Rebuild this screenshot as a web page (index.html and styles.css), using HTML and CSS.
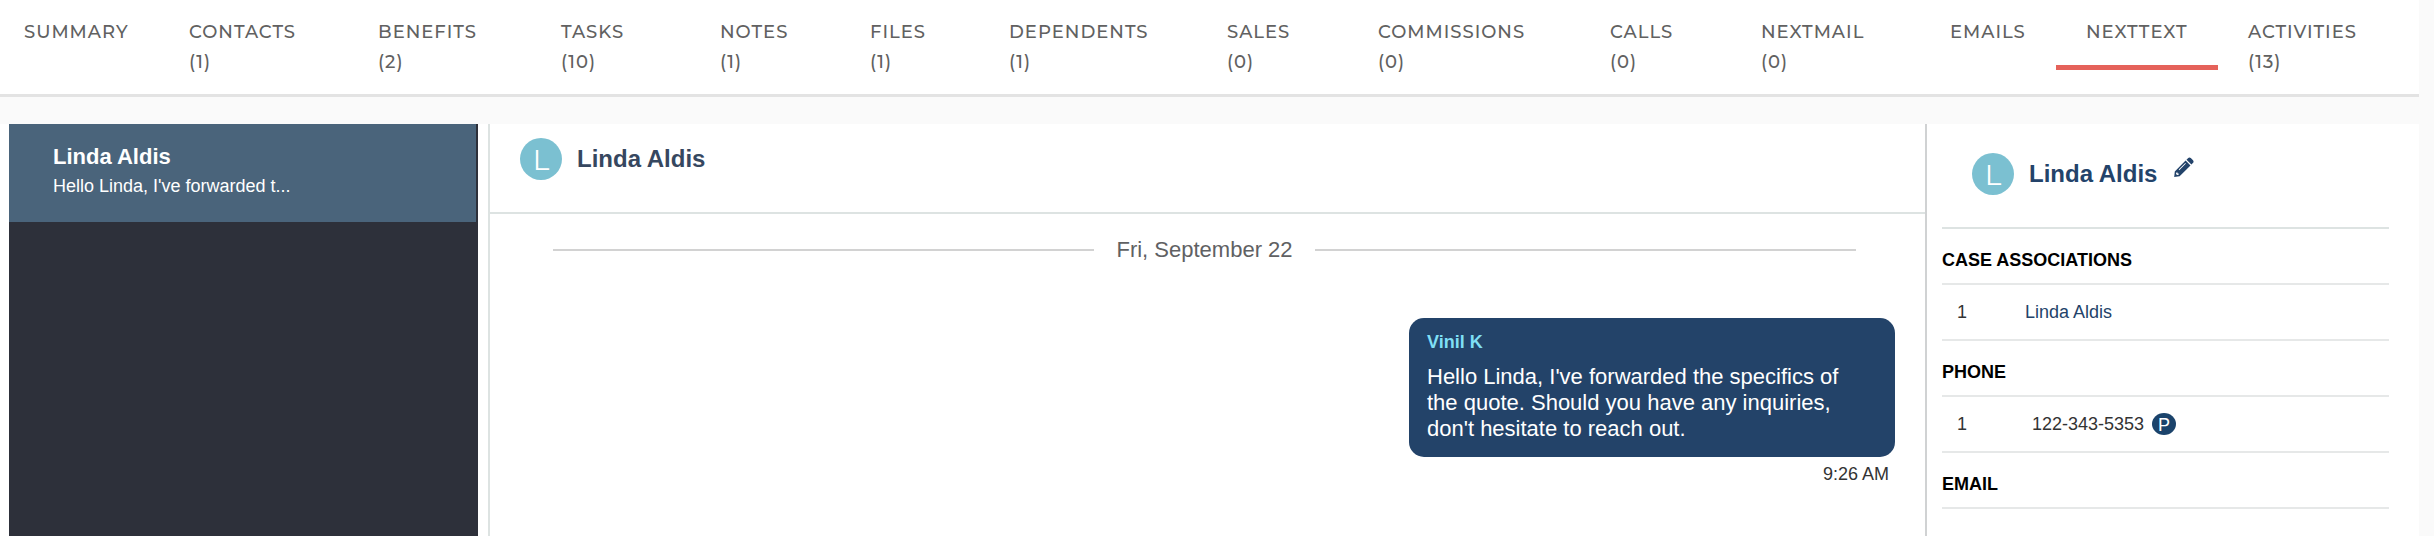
FILE: index.html
```html
<!DOCTYPE html>
<html lang="en">
<head>
  <meta charset="UTF-8" />
  <meta name="viewport" content="width=device-width, initial-scale=1.0" />
  <title>NextText</title>
  <link rel="stylesheet" href="styles.css">
</head>
<body>
  <div class="page">
    <nav class="tabs">
      <a href="#">SUMMARY</a>
      <a href="#">CONTACTS<br>(1)</a>
      <a href="#">BENEFITS<br>(2)</a>
      <a href="#">TASKS<br>(10)</a>
      <a href="#">NOTES<br>(1)</a>
      <a href="#">FILES<br>(1)</a>
      <a href="#">DEPENDENTS<br>(1)</a>
      <a href="#">SALES<br>(0)</a>
      <a href="#">COMMISSIONS<br>(0)</a>
      <a href="#">CALLS<br>(0)</a>
      <a href="#">NEXTMAIL<br>(0)</a>
      <a href="#">EMAILS</a>
      <a href="#" class="active">NEXTTEXT</a>
      <a href="#">ACTIVITIES<br>(13)</a>
    </nav>

    <main class="content">
      <aside class="conversations">
        <a href="#" class="conversation">
          <strong class="conversation-name">Linda Aldis</strong>
          <span class="conversation-preview">Hello Linda, I've forwarded t...</span>
        </a>
      </aside>

      <section class="chat">
        <header class="chat-header">
          <span class="avatar">L</span>
          <h2 class="name">Linda Aldis</h2>
        </header>
        <div class="messages">
          <div class="date">Fri, September 22</div>
          <div class="message">
            <div class="bubble">
              <strong class="sender">Vinil K</strong>
              <p>Hello Linda, I've forwarded the specifics of the quote. Should you have any inquiries, don't hesitate to reach out.</p>
            </div>
            <time class="time">9:26 AM</time>
          </div>
        </div>
      </section>

      <aside class="details">
        <header class="details-header">
          <span class="avatar">L</span>
          <h2 class="name">Linda Aldis</h2>
          <button type="button" class="edit" aria-label="Edit contact">
            <svg viewBox="0 0 20 20" width="20" height="20">
              <path fill="currentColor" d="M14 1.200c.8-.9 2-.9 2.800-.1l2.200 2.200c.8.8.8 2-.1 2.800l-1.500 1.500-4.900-4.900z" />
              <path fill="currentColor" fill-rule="evenodd" d="M11.600 3.600l4.900 4.900L5.600 19.300.2 19.900.8 14.400zM2.300 15.400l-.3 1.600 1.100 1.100 1.600-.3v-1.300H3.600v-1.100zM11.300 6L4.700 12.600l.6.600L11.900 6.600z" />
            </svg>
          </button>
        </header>

        <h3 class="section-title">CASE ASSOCIATIONS</h3>
        <div class="row">
          <span class="index">1</span>
          <a href="#">Linda Aldis</a>
        </div>

        <h3 class="section-title">PHONE</h3>
        <div class="row phone">
          <span class="index">1</span>
          <span>122-343-5353</span>
          <span class="badge">P</span>
        </div>

        <h3 class="section-title">EMAIL</h3>
      </aside>
    </main>
  </div>
</body>
</html>
```
FILE: styles.css
```css
* {
  box-sizing: border-box;
}
body {
  margin: 0;
  background: #fafafa;
  color: #333;
  font-family: "Liberation Sans", Arial, Helvetica, sans-serif;
  font-size: 18px;
}
h2, h3, p {
  margin: 0;
}
a {
  color: #23436a;
  text-decoration: none;
}
.page {
  display: flex;
  flex-direction: column;
  min-height: 100vh;
  margin-right: 15px;
}

/* top tabs */
.tabs {
  display: grid;
  grid-template-columns: 159fr 189fr 183fr 159fr 150fr 139fr 218fr 151fr 232fr 151fr 189fr 136fr 162fr 201fr;
  align-items: start;
  height: 97px;
  padding-top: 17px;
  background: #fff;
  border-bottom: 3px solid #e3e3e3;
}
.tabs a {
  padding-left: 30px;
  color: #616161;
  font-family: Montserrat, Inter, sans-serif;
  font-size: 18px;
  font-weight: 500;
  line-height: 30px;
  letter-spacing: 1px;
}
.tabs a:first-child {
  padding-left: 24px;
}
.tabs .active {
  height: 53px;
  border-bottom: 5px solid #e5625a;
}

.content {
  display: grid;
  grid-template-columns: 469px 1fr 494px;
  flex: 1;
  margin-top: 27px;
  padding-left: 9px;
  background: #fff;
}

/* conversation list */
.conversations {
  padding-right: 2px;
  background: #2d303a;
}
.conversation {
  display: block;
  height: 98px;
  padding: 20px 44px;
  background: #4a647b;
  color: #fff;
}
.conversation-name {
  display: block;
  font-size: 22px;
  line-height: 26px;
}
.conversation-preview {
  display: block;
  line-height: 32px;
}

/* chat */
.chat {
  margin-left: 10px;
  border-left: 2px solid #dde3e2;
}
.chat-header {
  display: flex;
  align-items: flex-start;
  gap: 15px;
  height: 90px;
  padding: 14px 30px;
  border-bottom: 2px solid #dde3e2;
}
.avatar {
  width: 42px;
  height: 42px;
  border-radius: 50%;
  background: #7bc0d1;
  color: #fff;
  font-family: Montserrat, Lato, sans-serif;
  font-size: 28px;
  line-height: 44px;
  text-align: center;
}
.name {
  color: #36475f;
  font-size: 24px;
  line-height: 42px;
}
.messages {
  padding: 20px 30px;
}
.date {
  display: flex;
  align-items: center;
  gap: 22px;
  padding: 0 39px 0 33px;
  color: #606163;
  font-size: 22px;
  line-height: 32px;
}
.date::before,
.date::after {
  content: "";
  flex: 1;
  height: 2px;
  background: #d2d2d2;
}
.message {
  display: flex;
  flex-direction: column;
  align-items: flex-end;
  margin-top: 52px;
}
.bubble {
  width: 486px;
  padding: 12px 40px 15px 18px;
  border-radius: 15px;
  background: #234369;
  color: #fff;
  font-size: 22px;
  line-height: 26px;
}
.sender {
  display: block;
  margin-bottom: 10px;
  color: #7fdff5;
  font-size: 18px;
  line-height: 24px;
}
.time {
  padding: 5px 6px 0;
  line-height: 24px;
}

/* contact details */
.details {
  padding: 0 30px 0 15px;
  border-left: 2px solid #d0d2d3;
}
.details-header {
  display: flex;
  align-items: flex-start;
  gap: 15px;
  height: 105px;
  padding: 29px 30px 0;
  border-bottom: 2px solid #dde3e2;
}
.details .name {
  color: #23436a;
}
.edit {
  height: 20px;
  margin: 4px 0 0 2px;
  padding: 0;
  border: 0;
  background: none;
  color: #23436a;
  cursor: pointer;
}
.edit svg {
  display: block;
}
.section-title,
.row {
  height: 56px;
  border-bottom: 2px solid #e6e8e8;
}
.section-title {
  padding-top: 18px;
  color: #000;
  font-size: 18px;
  line-height: 26px;
}
.row {
  display: flex;
  align-items: center;
  padding-left: 15px;
}
.index {
  width: 68px;
}
.phone .index {
  width: 75px;
}
.badge {
  width: 24px;
  height: 22px;
  margin-left: 8px;
  border-radius: 50%;
  background: #1b436b;
  color: #fff;
  line-height: 25px;
  text-align: center;
}
```
